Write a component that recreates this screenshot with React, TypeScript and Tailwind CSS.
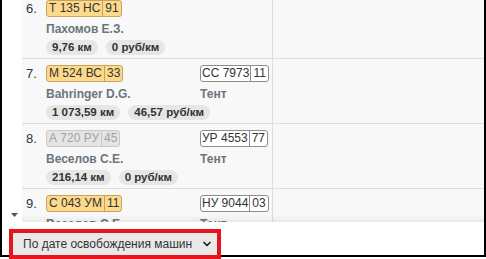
import { ChevronDown } from 'lucide-react';

interface Row {
  n: number;
  plate: string;
  region: string;
  muted?: boolean;
  driver: string;
  km: string;
  rate: string;
  trailer?: [string, string];
  body?: string;
}

const ROWS: Row[] = [
  { n: 6, plate: 'Т 135 НС', region: '91', driver: 'Пахомов Е.З.', km: '9,76 км', rate: '0 руб/км' },
  {
    n: 7,
    plate: 'М 524 ВС',
    region: '33',
    driver: 'Bahringer D.G.',
    km: '1 073,59 км',
    rate: '46,57 руб/км',
    trailer: ['СС 7973', '11'],
    body: 'Тент',
  },
  {
    n: 8,
    plate: 'А 720 РУ',
    region: '45',
    muted: true,
    driver: 'Веселов С.Е.',
    km: '216,14 км',
    rate: '0 руб/км',
    trailer: ['УР 4553', '77'],
    body: 'Тент',
  },
  {
    n: 9,
    plate: 'С 043 УМ',
    region: '11',
    driver: 'Веселов С.Е.',
    km: '0 км',
    rate: '0 руб/км',
    trailer: ['НУ 9044', '03'],
    body: 'Тент',
  },
];

function Plate({ num, region, muted }: { num: string; region: string; muted?: boolean }) {
  return (
    <div
      className={
        muted
          ? 'flex h-[17px] w-fit whitespace-nowrap rounded-[3px] border border-[#c9c9c9] bg-[#e4e4e4] text-[12px] leading-[15px] text-[#a3a3a3]'
          : 'flex h-[17px] w-fit whitespace-nowrap rounded-[3px] border border-[#c7a35c] bg-[#fdd98b] text-[12px] leading-[15px] text-[#333]'
      }
    >
      <span className="px-[2px]">{num}</span>
      <span className={muted ? 'border-l border-[#c9c9c9] px-[2px]' : 'border-l border-[#c7a35c] px-[2px]'}>
        {region}
      </span>
    </div>
  );
}

function TrailerPlate({ num, region }: { num: string; region: string }) {
  return (
    <div className="flex h-[17px] w-fit whitespace-nowrap rounded-[3px] border border-[#8d8d8d] bg-white text-[12px] leading-[15px] text-[#333]">
      <span className="px-[1px]">{num}</span>
      <span className="border-l border-[#8d8d8d] px-[2px]">{region}</span>
    </div>
  );
}

function Badge({ children }: { children: string }) {
  return (
    <span className="h-[15px] whitespace-nowrap rounded-full bg-[#e6e6e6] px-[6px] text-[11.5px] font-bold leading-[15px] text-[#333]">
      {children}
    </span>
  );
}

function OrderRow({ row }: { row: Row }) {
  return (
    <div className="flex h-[65px] shrink-0 border-b border-[#dedede]">
      <div className="flex w-[251px] border-r border-[#dedede] pt-[6px]">
        <div className="w-[24px] pl-[4px] text-[13px] leading-[17px] text-[#333]">{row.n}.</div>
        <div className="flex w-[154px] flex-col">
          <Plate num={row.plate} region={row.region} muted={row.muted} />
          <div className="mt-[4px] whitespace-nowrap text-[12px] font-bold leading-[16px] text-[#6c757d]">
            {row.driver}
          </div>
          <div className="mt-[3px] flex gap-[8px]">
            <Badge>{row.km}</Badge>
            <Badge>{row.rate}</Badge>
          </div>
        </div>
        {row.trailer && (
          <div className="flex flex-col">
            <TrailerPlate num={row.trailer[0]} region={row.trailer[1]} />
            <div className="mt-[4px] text-[12px] font-bold leading-[16px] text-[#6c757d]">{row.body}</div>
          </div>
        )}
      </div>
      <div className="flex-1" />
    </div>
  );
}

export default function App() {
  return (
    <div
      className="h-[259px] w-[486px] overflow-hidden bg-white"
      style={{ fontFamily: '"Liberation Sans", Arial, sans-serif' }}
    >
      <div className="flex h-[257px] w-[486px] flex-col border-x-2 border-b-2 border-black">
        <div className="flex h-[222px] shrink-0">
          <div className="relative w-[20px] bg-white">
            <svg className="absolute left-[9px] top-[213px]" width="7" height="4" viewBox="0 0 7 4">
              <polygon points="0,0 7,0 3.5,4" fill="#555" />
            </svg>
          </div>
          <div className="relative flex-1 overflow-hidden bg-[#f8f8f8]">
            <div className="-mt-[6px] flex flex-col">
              {ROWS.map((r) => (
                <OrderRow key={r.n} row={r} />
              ))}
            </div>
            <div className="absolute bottom-0 left-0 right-0 h-[7px] bg-gradient-to-b from-transparent to-black/[0.06]" />
          </div>
        </div>
        <div className="h-[33px] pl-[11px] pt-[11px]">
          <div className="relative flex h-[22px] w-[204px] items-center gap-[9px] bg-[#e9e9e9] pl-[10px] text-[12px] text-[#333]">
            <span className="whitespace-nowrap">По дате освобождения машин</span>
            <ChevronDown className="shrink-0" size={12} strokeWidth={3.5} color="#222" />
            <div className="pointer-events-none absolute -inset-[4px] border-4 border-[#e8141c]" />
          </div>
        </div>
      </div>
    </div>
  );
}
